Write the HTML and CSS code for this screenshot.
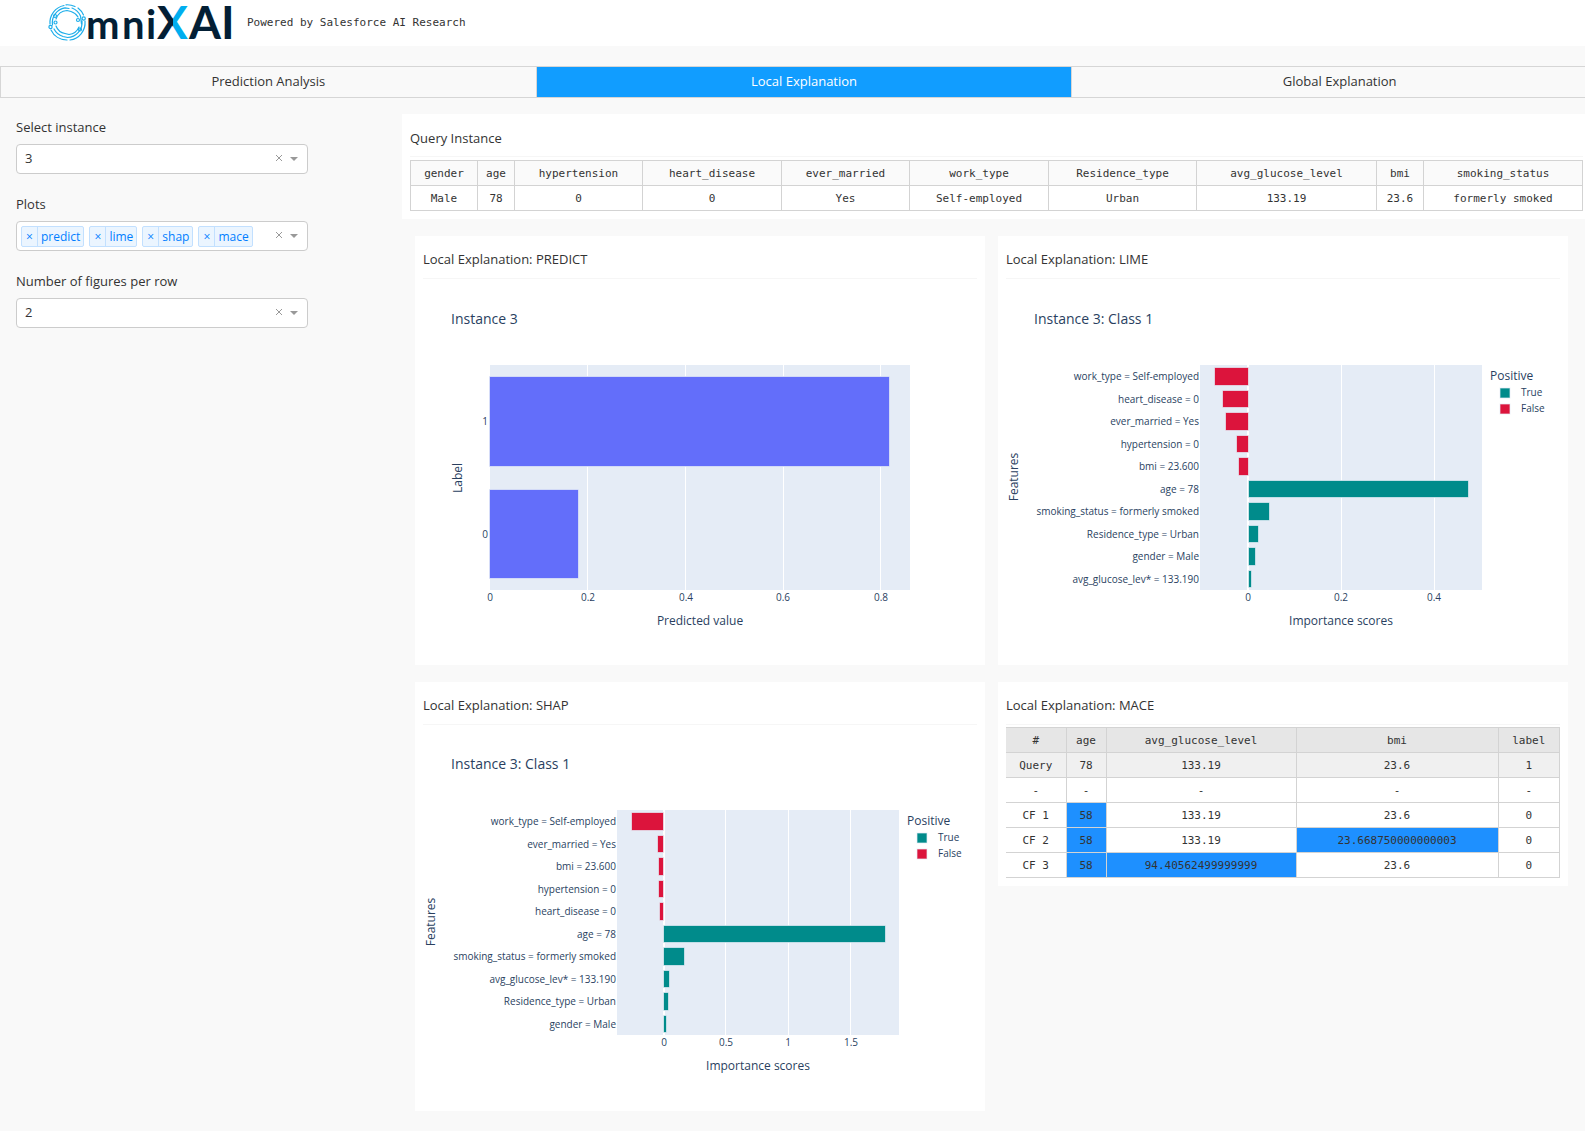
FILE: index.html
```html
<!DOCTYPE html>
<html lang="en">
<head>
<meta charset="utf-8">
<title>OmniXAI</title>
<link rel="stylesheet" href="styles.css">
</head>
<body>
<header class="banner">
  <svg class="logo" width="186" height="46" viewBox="0 0 186 46" role="img" aria-label="OmniXAI">
    <defs>
      <linearGradient id="split"><stop offset="0.53" stop-color="#031f35"/><stop offset="0.53" stop-color="#00aeef"/></linearGradient>
    </defs>
    <g fill="none" stroke="#1eaeea" stroke-width="1.2" stroke-linecap="round">
      <path d="M2 24A17.500 17.500 0 0 1 16 5.500M18 4.800A17.500 17.500 0 0 1 27 6.500M30 8A17.500 17.500 0 0 1 35.500 15M37 21A17.500 17.500 0 0 1 22 40M3 30A17.500 17.500 0 0 0 19 40"/>
      <path d="M4.500 25A15 15 0 0 1 17 7.800L21 8.500M24 8A15 15 0 0 1 32.500 16L33.500 24M34 21A15 15 0 0 1 19.500 37.500L15 36.500A15 15 0 0 1 6 29"/>
      <path d="M8 19A12.500 12.500 0 0 1 19 10.500L23 11.500A12 12 0 0 1 30 17M31 27A12.500 12.500 0 0 1 21 34.500L17 33.500A12 12 0 0 1 8 26"/>
      <circle cx="35.700" cy="18.500" r="1.600"/><circle cx="2.500" cy="27" r="1.600"/>
      <circle cx="30" cy="20" r="1.500"/><circle cx="7.500" cy="22.500" r="1.500"/>
      <circle cx="32" cy="29.500" r="1.500"/><circle cx="7" cy="16" r="1.500"/>
    </g>
    <g class="wordmark">
      <text class="word-lower" x="38" y="39">m</text>
      <text class="word-lower" x="74" y="39">n</text>
      <text class="word-lower" x="98" y="39">i</text>
      <text class="word-upper" x="109" y="39" fill="url(#split)">X</text>
      <text class="word-upper" x="141" y="39">A</text>
      <text class="word-upper" x="173" y="39">I</text>
    </g>
  </svg>
  <span class="tagline">Powered by Salesforce AI Research</span>
</header>

<nav class="tabs" role="tablist">
  <button class="tab" role="tab" type="button">Prediction Analysis</button>
  <button class="tab tab-active" role="tab" type="button" aria-selected="true">Local Explanation</button>
  <button class="tab" role="tab" type="button">Global Explanation</button>
</nav>

<div class="layout">
  <aside class="sidebar">
    <div class="field">
      <label for="instance">Select instance</label>
      <div class="control">
        <select id="instance"><option>3</option></select>
        <button class="clear" type="button" aria-label="Clear instance"><svg width="8" height="8" viewBox="0 0 8 8"><path d="M1 1l6 6M7 1l-6 6"/></svg></button>
        <svg class="arrow" width="8" height="4" viewBox="0 0 8 4"><path d="M0 0h8l-4 4z"/></svg>
      </div>
    </div>
    <div class="field">
      <label for="plots">Plots</label>
      <div class="control">
        <span class="tag"><button type="button" aria-label="Remove predict">×</button><span>predict</span></span>
        <span class="tag"><button type="button" aria-label="Remove lime">×</button><span>lime</span></span>
        <span class="tag"><button type="button" aria-label="Remove shap">×</button><span>shap</span></span>
        <span class="tag"><button type="button" aria-label="Remove mace">×</button><span>mace</span></span>
        <select class="adder" id="plots"><option></option></select>
        <button class="clear" type="button" aria-label="Clear plots"><svg width="8" height="8" viewBox="0 0 8 8"><path d="M1 1l6 6M7 1l-6 6"/></svg></button>
        <svg class="arrow" width="8" height="4" viewBox="0 0 8 4"><path d="M0 0h8l-4 4z"/></svg>
      </div>
    </div>
    <div class="field">
      <label for="perrow">Number of figures per row</label>
      <div class="control">
        <select id="perrow"><option>2</option></select>
        <button class="clear" type="button" aria-label="Clear number of figures"><svg width="8" height="8" viewBox="0 0 8 8"><path d="M1 1l6 6M7 1l-6 6"/></svg></button>
        <svg class="arrow" width="8" height="4" viewBox="0 0 8 4"><path d="M0 0h8l-4 4z"/></svg>
      </div>
    </div>
  </aside>

  <main class="content">
    <section class="card query">
      <h2>Query Instance</h2>
      <table class="query-table">
        <colgroup><col class="w-gender"><col class="w-age"><col class="w-hyper"><col class="w-heart"><col class="w-hyper"><col class="w-heart"><col class="w-home"><col class="w-glucose"><col class="w-bmi"><col></colgroup>
        <thead><tr><th>gender</th><th>age</th><th>hypertension</th><th>heart_disease</th><th>ever_married</th><th>work_type</th><th>Residence_type</th><th>avg_glucose_level</th><th>bmi</th><th>smoking_status</th></tr></thead>
        <tbody><tr><td>Male</td><td>78</td><td>0</td><td>0</td><td>Yes</td><td>Self-employed</td><td>Urban</td><td>133.19</td><td>23.6</td><td>formerly smoked</td></tr></tbody>
      </table>
    </section>

    <div class="cards">
      <section class="card">
        <h2>Local Explanation: PREDICT</h2>
        <svg class="chart" viewBox="0 0 554 378">
          <text class="title" x="28" y="45">Instance 3</text>
          <rect class="plot" x="67" y="86" width="420" height="225"/>
          <path class="grid" d="M164.500 86v225M262.500 86v225M360.500 86v225M457.500 86v225"/>
          <g class="bar indigo">
            <rect x="66.500" y="97.500" width="400" height="90"/>
            <rect x="66.500" y="210.500" width="89" height="89"/>
          </g>
          <g class="tick end"><text x="65" y="146">1</text><text x="65" y="259">0</text></g>
          <g class="tick mid"><text x="67" y="322">0</text><text x="165" y="322">0.2</text><text x="263" y="322">0.4</text><text x="360" y="322">0.6</text><text x="458" y="322">0.8</text></g>
          <text class="axis" x="277" y="346">Predicted value</text>
          <text class="axis" transform="translate(39 199) rotate(-90)">Label</text>
        </svg>
      </section>

      <section class="card">
        <h2>Local Explanation: LIME</h2>
        <svg class="chart" viewBox="0 0 554 378">
          <text class="title" x="28" y="45">Instance 3: Class 1</text>
          <rect class="plot" x="194" y="86" width="282" height="225"/>
          <path class="grid" d="M335.500 86v225M428.500 86v225"/>
          <path class="zero" d="M242 86v225"/>
          <g class="bar crimson">
            <rect x="208.500" y="88.500" width="34" height="18"/><rect x="216.500" y="111.500" width="26" height="17"/><rect x="219.500" y="133.500" width="23" height="18"/><rect x="230.500" y="156.500" width="12" height="17"/><rect x="232.500" y="178.500" width="10" height="18"/>
          </g>
          <g class="bar teal">
            <rect x="242.500" y="201.500" width="220" height="17"/><rect x="242.500" y="223.500" width="21" height="18"/><rect x="242.500" y="246.500" width="10" height="17"/><rect x="242.500" y="268.500" width="7" height="18"/><rect x="242.500" y="291.500" width="3" height="17"/>
          </g>
          <g class="tick end">
            <text x="193" y="101">work_type = Self-employed</text><text x="193" y="124">heart_disease = 0</text><text x="193" y="146">ever_married = Yes</text><text x="193" y="169">hypertension = 0</text><text x="193" y="191">bmi = 23.600</text><text x="193" y="214">age = 78</text><text x="193" y="236">smoking_status = formerly smoked</text><text x="193" y="259">Residence_type = Urban</text><text x="193" y="281">gender = Male</text><text x="193" y="304">avg_glucose_lev* = 133.190</text>
          </g>
          <g class="tick mid"><text x="242" y="322">0</text><text x="335" y="322">0.2</text><text x="428" y="322">0.4</text></g>
          <text class="axis" x="335" y="346">Importance scores</text>
          <text class="axis" transform="translate(12 198) rotate(-90)">Features</text>
          <text class="legend" x="484" y="101">Positive</text>
          <g class="bar teal"><rect x="494" y="109" width="10" height="10"/></g><text class="tick" x="515" y="117">True</text>
          <g class="bar crimson"><rect x="494" y="125" width="10" height="10"/></g><text class="tick" x="515" y="133">False</text>
        </svg>
      </section>

      <section class="card">
        <h2>Local Explanation: SHAP</h2>
        <svg class="chart" viewBox="0 0 554 378">
          <text class="title" x="28" y="44">Instance 3: Class 1</text>
          <rect class="plot" x="194" y="85" width="282" height="225"/>
          <path class="grid" d="M302.500 85v225M365.500 85v225M427.500 85v225"/>
          <path class="zero" d="M241 85v225"/>
          <g class="bar crimson">
            <rect x="208.500" y="87.500" width="32" height="18"/><rect x="234.500" y="110.500" width="6" height="17"/><rect x="235.500" y="132.500" width="5" height="18"/><rect x="235.500" y="155.500" width="5" height="17"/><rect x="236.500" y="177.500" width="4" height="18"/>
          </g>
          <g class="bar teal">
            <rect x="240.500" y="200.500" width="222" height="17"/><rect x="240.500" y="222.500" width="21" height="18"/><rect x="240.500" y="245.500" width="6" height="17"/><rect x="240.500" y="267.500" width="5" height="18"/><rect x="240.500" y="290.500" width="3" height="17"/>
          </g>
          <g class="tick end">
            <text x="193" y="100">work_type = Self-employed</text><text x="193" y="123">ever_married = Yes</text><text x="193" y="145">bmi = 23.600</text><text x="193" y="168">hypertension = 0</text><text x="193" y="190">heart_disease = 0</text><text x="193" y="213">age = 78</text><text x="193" y="235">smoking_status = formerly smoked</text><text x="193" y="258">avg_glucose_lev* = 133.190</text><text x="193" y="280">Residence_type = Urban</text><text x="193" y="303">gender = Male</text>
          </g>
          <g class="tick mid"><text x="241" y="321">0</text><text x="303" y="321">0.5</text><text x="365" y="321">1</text><text x="428" y="321">1.5</text></g>
          <text class="axis" x="335" y="345">Importance scores</text>
          <text class="axis" transform="translate(12 197) rotate(-90)">Features</text>
          <text class="legend" x="484" y="100">Positive</text>
          <g class="bar teal"><rect x="494" y="108" width="10" height="10"/></g><text class="tick" x="515" y="116">True</text>
          <g class="bar crimson"><rect x="494" y="124" width="10" height="10"/></g><text class="tick" x="515" y="132">False</text>
        </svg>
      </section>

      <section class="card">
        <h2>Local Explanation: MACE</h2>
        <table class="mace-table">
          <colgroup><col class="m-name"><col class="m-age"><col class="m-glucose"><col class="m-bmi"><col></colgroup>
          <thead><tr><th>#</th><th>age</th><th>avg_glucose_level</th><th>bmi</th><th>label</th></tr></thead>
          <tbody>
            <tr class="base"><td>Query</td><td>78</td><td>133.19</td><td>23.6</td><td>1</td></tr>
            <tr><td>-</td><td>-</td><td>-</td><td>-</td><td>-</td></tr>
            <tr><td>CF 1</td><td class="changed">58</td><td>133.19</td><td>23.6</td><td>0</td></tr>
            <tr><td>CF 2</td><td class="changed">58</td><td>133.19</td><td class="changed">23.668750000000003</td><td>0</td></tr>
            <tr><td>CF 3</td><td class="changed">58</td><td class="changed">94.40562499999999</td><td>23.6</td><td>0</td></tr>
          </tbody>
        </table>
      </section>
    </div>
  </main>
</div>
</body>
</html>
```
FILE: styles.css
```css
* { box-sizing: border-box; }
body {
  margin: 0;
  background: #f9f9f9;
  color: #333;
  font: 13px/18px "Open Sans", sans-serif;
  overflow-x: hidden;
}
button, select { font: inherit; color: inherit; }

.banner {
  display: flex;
  align-items: center;
  gap: 13px;
  height: 46px;
  padding-left: 48px;
  background: #fff;
}
.logo { overflow: visible; }
.wordmark { font-family: Lato, sans-serif; font-weight: 700; fill: #031f35; }
.word-lower { font-size: 40px; }
.word-upper { font-size: 46px; }
.tagline, table { font-family: "DejaVu Sans Mono", monospace; font-size: 11px; }

.tabs {
  display: flex;
  width: calc(100% + 22px);
  margin-top: 20px;
}
.tab {
  flex: 1;
  height: 32px;
  padding: 0 0 2px;
  border: 1px solid #d6d6d6;
  border-right: 0;
  background: #f9f9f9;
  font-weight: 500;
}
.tab-active { background: #119dff; color: #fff; }

.layout {
  display: grid;
  grid-template-columns: 402px minmax(0, 1fr);
  padding: 16px 0 20px;
}
.sidebar {
  display: flex;
  flex-direction: column;
  gap: 21px;
  padding: 4px 94px 0 16px;
}
.field { display: flex; flex-direction: column; gap: 8px; }
.field label { font-weight: 500; }
.control {
  display: flex;
  align-items: center;
  gap: 5px;
  height: 30px;
  padding: 0 9px 0 4px;
  border: 1px solid #ccc;
  border-radius: 4px;
  background: #fff;
}
.control select {
  flex: 1;
  min-width: 0;
  height: 28px;
  padding: 0 4px 2px;
  border: 0;
  background: none;
  appearance: none;
}
.control .adder { padding: 0; }
.clear { display: flex; flex: none; padding: 0 2px 2px; border: 0; background: none; }
.clear path { fill: none; stroke: #999; stroke-width: 1; }
.arrow { flex: none; fill: #999; }
.tag {
  display: flex;
  height: 21px;
  border: 1px solid #c2e0ff;
  border-radius: 2px;
  background: #ebf5ff;
  color: #007eff;
  font-size: 12px;
  line-height: 19px;
}
.tag button {
  width: 16px;
  padding: 0;
  border: 0;
  border-right: 1px solid #c2e0ff;
  background: none;
}
.tag span { padding: 0 3px; }

.card { padding: 0 8px 8px; background: #fff; }
.card h2 {
  margin: 0;
  padding: 14px 0 10px;
  border-bottom: 1px solid #f6f6f6;
  font-size: 13px;
  line-height: 18px;
  font-weight: 500;
}
.query { margin-right: -6px; }
.query h2 { padding: 15px 0 9px; }
.cards {
  display: grid;
  grid-template-columns: 1fr 1fr;
  align-items: start;
  gap: 17px 13px;
  margin: 17px 17px 0 13px;
}

table {
  width: 100%;
  margin-top: 3px;
  border-collapse: collapse;
  table-layout: fixed;
  line-height: 16px;
  text-align: center;
}
th, td { height: 25px; padding: 2px 0 0; border: 1px solid #d3d3d3; font-weight: 400; }
.query-table th { background: #fafafa; }
.mace-table { margin-top: 2px; }
.mace-table th { background: #e6e6e6; }
.mace-table tr > :first-child { border-left: 0; }
.base { background: #f0f0f0; }
.changed { background: #1e90ff; }
.w-gender { width: 67px; }
.w-age { width: 37px; }
.w-hyper { width: 128px; }
.w-heart { width: 139px; }
.w-home { width: 148px; }
.w-glucose { width: 180px; }
.w-bmi { width: 47px; }
.m-name { width: 60px; }
.m-age { width: 40px; }
.m-glucose { width: 190px; }
.m-bmi { width: 202px; }

.chart { display: block; width: 100%; height: auto; fill: #2a3f5f; }
.title { font-size: 14px; }
.axis { font-size: 12px; text-anchor: middle; }
.legend { font-size: 12px; }
.tick { font-size: 10px; }
.end { text-anchor: end; }
.mid { text-anchor: middle; }
.plot { fill: #e5ecf6; }
.grid { stroke: #fff; stroke-width: 1; }
.zero { stroke: #fff; stroke-width: 2; }
.bar { stroke: #e5ecf6; stroke-opacity: 0.7; stroke-width: 1; }
.indigo { fill: #636efa; }
.teal { fill: #008b8b; }
.crimson { fill: #dc143c; }
```
